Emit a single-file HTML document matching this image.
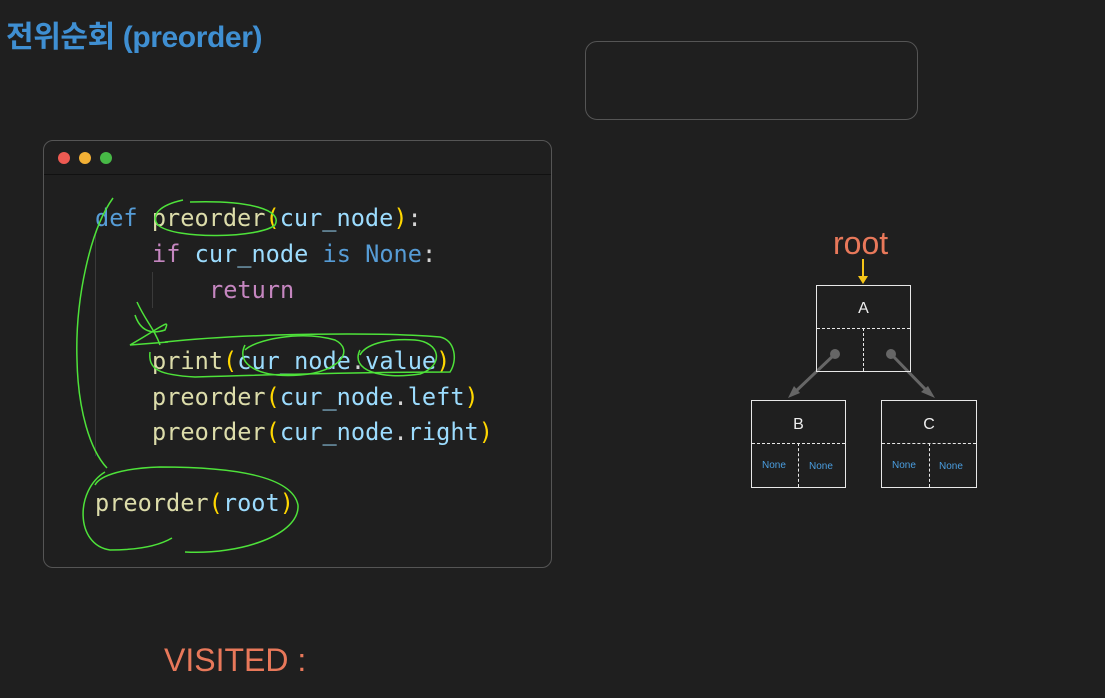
<html><head><style>
body{margin:0;width:1105px;height:698px;background:#1f1f1f;overflow:hidden;position:relative;font-family:"Liberation Sans",sans-serif}
.c{position:absolute;font-family:"DejaVu Sans Mono",monospace;font-size:23.6px;line-height:36px;white-space:pre;color:#dcdcaa}
.k{color:#569cd6}.v{color:#9cdcfe}.p{color:#ffd700}.m{color:#c586c0}.w{color:#d4d4d4}.n{color:#4fa0e0}
.box{position:absolute;border:1.5px solid #e8e8e8;box-sizing:border-box}
.dh{position:absolute;border-top:1.5px dashed #e8e8e8}
.dv{position:absolute;border-left:1.5px dashed #e8e8e8}
.l{position:absolute;color:#eee;font-size:16px;width:100%;text-align:center}
.nn{position:absolute;color:#4a9ee0;font-size:10px}
</style></head><body>
<div style="position:absolute;left:6px;top:12px;font-size:30px;font-weight:bold;color:#3f8fd2;letter-spacing:-0.4px;font-family:'Liberation Sans','Noto Sans CJK KR',sans-serif">전위순회 (preorder)</div>
<div style="position:absolute;left:585px;top:41px;width:333px;height:79px;border:1px solid #555;border-radius:12px;box-sizing:border-box"></div>
<div style="position:absolute;left:43px;top:140px;width:509px;height:428px;border:1px solid #555;border-radius:10px;box-sizing:border-box"></div>
<div style="position:absolute;left:44px;top:174px;width:507px;height:1px;background:#111"></div>
<div style="position:absolute;left:58px;top:152px;width:12px;height:12px;border-radius:50%;background:#ee5a52"></div>
<div style="position:absolute;left:79px;top:152px;width:12px;height:12px;border-radius:50%;background:#f2b035"></div>
<div style="position:absolute;left:100px;top:152px;width:12px;height:12px;border-radius:50%;background:#47b946"></div>
<div style="position:absolute;left:95px;top:234px;width:1px;height:222px;background:#3a3a3a"></div>
<div style="position:absolute;left:152px;top:272px;width:1px;height:36px;background:#3a3a3a"></div>
<div class="c" style="left:95px;top:200px"><span class="k">def</span> preorder<span class="p">(</span><span class="v">cur_node</span><span class="p">)</span><span class="w">:</span></div>
<div class="c" style="left:152px;top:236px"><span class="m">if</span> <span class="v">cur_node</span> <span class="k">is</span> <span class="k">None</span><span class="w">:</span></div>
<div class="c" style="left:209px;top:272px"><span class="m">return</span></div>
<div class="c" style="left:152px;top:343px">print<span class="p">(</span><span class="v">cur_node</span><span class="w">.</span><span class="v">value</span><span class="p">)</span></div>
<div class="c" style="left:152px;top:379px">preorder<span class="p">(</span><span class="v">cur_node</span><span class="w">.</span><span class="v">left</span><span class="p">)</span></div>
<div class="c" style="left:152px;top:414px">preorder<span class="p">(</span><span class="v">cur_node</span><span class="w">.</span><span class="v">right</span><span class="p">)</span></div>
<div class="c" style="left:95px;top:485px">preorder<span class="p">(</span><span class="v">root</span><span class="p">)</span></div>
<svg style="position:absolute;left:0;top:0" width="1105" height="698" fill="none" stroke="#4ee23a" stroke-width="1.5">
<path d="M113 198 C90 230 75 300 77 360 C78 410 90 450 107 468"/>
<path d="M183 200 C160 205 150 215 158 225 C175 240 260 238 275 225 C283 210 250 200 190 202"/>
<path d="M137 302 C145 320 155 330 160 345 M135 315 C140 330 150 335 165 330 C170 318 165 325 130 345 L168 342"/>
<path d="M150 352 C148 370 160 375 195 377 C260 375 380 372 450 372 C458 360 455 340 440 337 C380 332 250 333 165 342"/>
<path d="M245 345 C235 365 260 378 300 375 C340 372 355 350 335 340 C300 330 255 340 245 350"/>
<path d="M360 350 C350 370 380 380 420 374 C445 365 440 342 415 340 C385 338 365 345 360 355"/>
<path d="M105 472 C75 490 75 545 110 550 C140 550 160 545 172 538 M185 552 C240 555 300 535 298 505 C292 475 230 467 160 467 C125 468 100 475 95 485"/>
</svg>
<div style="position:absolute;left:833px;top:225px;font-size:32px;color:#e8785a">root</div>
<svg style="position:absolute;left:0;top:0" width="1105" height="698">
<line x1="863" y1="259" x2="863" y2="278" stroke="#f5c518" stroke-width="2"/><path d="M858 276 L868 276 L863 284Z" fill="#f5c518"/>
<g stroke="#666" stroke-width="3" fill="#666"><line x1="835" y1="354" x2="795" y2="392"/><line x1="891" y1="354" x2="928" y2="392"/></g>
<circle cx="835" cy="354" r="5" fill="#666"/><circle cx="891" cy="354" r="5" fill="#666"/>
<path d="M788 398 L794 386 L800 393Z M935 398 L921 392 L928 386Z" fill="#666"/>
</svg>
<div class="box" style="left:816px;top:285px;width:95px;height:87px"><div class="l" style="top:14px">A</div><div class="dh" style="left:0;right:0;top:42px"></div><div class="dv" style="left:46px;top:42px;bottom:0"></div></div>
<div class="box" style="left:751px;top:400px;width:95px;height:88px"><div class="l" style="top:15px">B</div><div class="dh" style="left:0;right:0;top:42px"></div><div class="dv" style="left:46px;top:42px;bottom:0"></div><div class="nn" style="left:10px;top:59px">None</div><div class="nn" style="left:57px;top:60px">None</div></div>
<div class="box" style="left:881px;top:400px;width:96px;height:88px"><div class="l" style="top:15px">C</div><div class="dh" style="left:0;right:0;top:42px"></div><div class="dv" style="left:47px;top:42px;bottom:0"></div><div class="nn" style="left:10px;top:59px">None</div><div class="nn" style="left:57px;top:60px">None</div></div>
<div style="position:absolute;left:164px;top:642px;font-size:32px;color:#e8785a">VISITED :</div>
</body></html>
